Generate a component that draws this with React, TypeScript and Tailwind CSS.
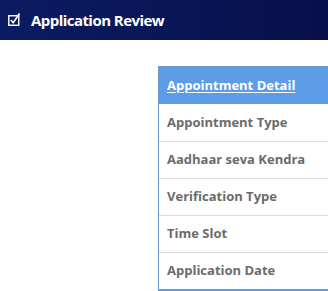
const rows = [
  "Appointment Type",
  "Aadhaar seva Kendra",
  "Verification Type",
  "Time Slot",
  "Application Date",
];

export default function App() {
  return (
    <div
      className="w-[328px] h-[291px] overflow-hidden bg-white"
      style={{ fontFamily: '"Open Sans", "Noto Sans", sans-serif' }}
    >
      <div className="h-[40px] flex items-center pl-[8px] bg-gradient-to-r from-[#0b1c62] to-[#07104a] text-white">
        <svg width="13" height="13" viewBox="0 0 13 13" className="mr-[10px] mt-[-2px]" fill="none" stroke="white">
          <rect x="0.75" y="2.75" width="10" height="9.5" strokeWidth="1.4" />
          <path d="M2.8 7 L5.2 9.6 L11.5 0.5" strokeWidth="1.6" />
        </svg>
        <span className="text-[15px] font-bold tracking-[-0.55px]">Application Review</span>
      </div>
      <div className="ml-[158px] mt-[26px] w-[200px] border-l border-t border-[#6f96c8] border-b-2 border-b-[#5d9ce6]">
        <div className="h-[37px] bg-[#5d9ce6] flex items-center px-[8px]">
          <span className="text-[13px] font-bold text-white underline underline-offset-2">
            Appointment Detail
          </span>
        </div>
        {rows.map((r, i) => (
          <div
            key={r}
            className={`h-[37px] flex items-center px-[8px] ${i > 0 ? "border-t border-[#dcdcdc]" : ""}`}
          >
            <span className="text-[13px] font-bold text-[#6b6b6b]">{r}</span>
          </div>
        ))}
      </div>
    </div>
  );
}
